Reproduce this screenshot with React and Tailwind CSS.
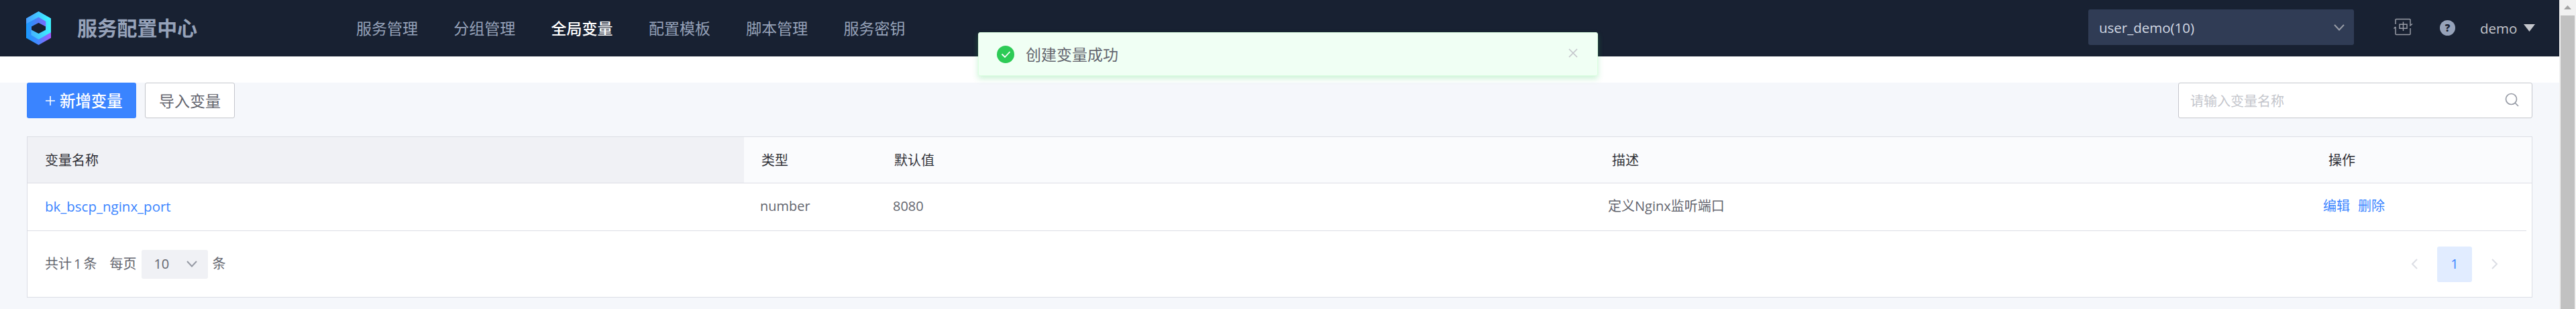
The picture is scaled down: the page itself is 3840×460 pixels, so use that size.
const NAV = ['服务管理', '分组管理', '全局变量', '配置模板', '脚本管理', '服务密钥'];

const CELL_FONT = "font-['Open_Sans','Noto_Sans_CJK_SC',sans-serif]";

function Logo() {
  return (
    <svg className="block h-[50px] w-[37px] shrink-0" viewBox="0 0 37 50">
      <defs>
        <linearGradient id="top" x1="0" y1="0" x2="1" y2="0">
          <stop offset="0" stopColor="#4a9cff" />
          <stop offset="0.9" stopColor="#3cf2ff" />
        </linearGradient>
        <linearGradient id="base" x1="0" y1="0" x2="1" y2="0">
          <stop offset="0" stopColor="#0f9bff" />
          <stop offset="0.5" stopColor="#4a86ff" />
          <stop offset="1" stopColor="#a55cff" />
        </linearGradient>
        <linearGradient id="inner" x1="0" y1="0" x2="1" y2="0">
          <stop offset="0" stopColor="#169cff" />
          <stop offset="0.5" stopColor="#4a80f5" />
          <stop offset="1" stopColor="#7a6cff" />
        </linearGradient>
        <linearGradient id="ring" x1="0" y1="0" x2="1" y2="0">
          <stop offset="0" stopColor="#45b4ff" />
          <stop offset="1" stopColor="#3cf2ff" />
        </linearGradient>
      </defs>
      <path d="M18.5 0 37 10.500V39.500L18.500 50 0 39.500V10.500Z" fill="url(#base)" />
      <path d="M18.500 0 37 10.500V31L18.500 41.500 7.500 35V15L0 19V10.500Z" fill="url(#top)" />
      <path d="M0 18.500 18.500 8.500 29.500 15V27.500H7.500V38L0 39.500Z" fill="url(#inner)" />
      <path d="M7.500 26.500 18.500 32.500 29.500 26V15L37 11V31L18.500 41.500 7.500 35Z" fill="url(#ring)" />
      <path d="M18.500 17 29 22.500V27.500L18.500 33 8 27.500V22.500Z" fill="#182132" />
    </svg>
  );
}

function Chevron({ className, d }) {
  return (
    <svg className={className} viewBox="0 0 16 16" fill="none" stroke="currentColor" strokeWidth="2">
      <path d={d} />
    </svg>
  );
}

function Header() {
  return (
    <header className="flex h-[84px] items-center bg-[#182132] text-[#96a2b9]">
      <div className="flex w-[531px] shrink-0 items-center pl-[39px]">
        <Logo />
        <h1 className="ml-[39px] text-[30px] leading-[40px] font-bold tracking-[-0.2px]">服务配置中心</h1>
      </div>
      <nav className="flex gap-[53px] pb-px text-[23px] leading-[34px]">
        {NAV.map((item) => (
          <a key={item} className={item === '全局变量' ? 'w-[92.3px] font-medium whitespace-nowrap text-white' : 'w-[92.3px] whitespace-nowrap'}>
            {item}
          </a>
        ))}
      </nav>
      <div className="ml-auto flex h-full items-center">
        <div className="mb-[3px] flex h-[53px] w-[396px] items-center justify-between rounded-[3px] bg-[#303c55] pr-[14px] pl-[16px] text-[#d3d9e4]">
          <span className="text-[20.5px] leading-[30px]">user_demo(10)</span>
          <Chevron className="h-4 w-4 text-[#979ba5]" d="M1 4 8 11.500 15 4" />
        </div>
        <svg className="mb-[3px] ml-[59px] h-[27px] w-[29px]" viewBox="0 0 29 27" fill="none" stroke="#979ba5" strokeWidth="1.500">
          <path d="M3 9V2.500Q3 1.500 4 1.500H24Q25 1.500 25 2.500V11L28 8.500M3 13V23.500Q3 24.500 4 24.500H24Q25 24.500 25 23.500V15M3 13 0.500 15.500" />
          <path d="M9 9.200H20V15.200H9ZM14.500 5.500V19" />
        </svg>
        <span className="mb-px ml-[40px] flex h-[23px] w-[23px] items-center justify-center rounded-full bg-[#96a2b9] text-[15px] leading-none font-extrabold text-[#182132]">?</span>
        <span className="ml-[37px] w-[56px] text-[20.5px] leading-[30px] text-[#c4c6cc]">demo</span>
        <svg className="mr-[36px] mb-px ml-[9px] h-[11px] w-[17px]" viewBox="0 0 17 11">
          <path d="M0 0H17L8.500 11Z" fill="#c4c6cc" />
        </svg>
      </div>
    </header>
  );
}

function Toast() {
  return (
    <div className="absolute top-[48px] left-[1458px] flex h-[65px] w-[924px] items-center rounded-[3px] border border-[#dcffe2] bg-[#f0fff4] pr-[29px] pl-[27px] shadow-[0_4px_8px_0_rgba(45,203,86,0.25)]">
      <svg className="h-[26px] w-[26px]" viewBox="0 0 26 26">
        <circle cx="13" cy="13" r="13" fill="#2dcb56" />
        <path d="M7.500 12.500 12 17 19.500 9" fill="none" stroke="#fff" strokeWidth="1.800" />
      </svg>
      <span className="ml-[17px] text-[23px] leading-[34px] text-[#63656e]">创建变量成功</span>
      <svg className="mb-[3px] ml-auto h-[14px] w-[14px]" viewBox="0 0 14 14" fill="none" stroke="#c4c6cc" strokeWidth="1.700">
        <path d="M1 1 13 13M13 1 1 13" />
      </svg>
    </div>
  );
}

function Toolbar() {
  return (
    <div className="flex h-[53px] items-stretch">
      <button className="flex w-[163px] items-center rounded-[3px] bg-[#3a84ff] pl-[28px] text-[23.4px] leading-[34px] text-white">
        <svg className="h-[14px] w-[14px]" viewBox="0 0 14 14" stroke="#fff" strokeWidth="1.600">
          <path d="M7 0V14M0 7H14" />
        </svg>
        <span className="ml-[7px] font-medium whitespace-nowrap">新增变量</span>
      </button>
      <button className="ml-[13px] flex w-[134px] items-center justify-center rounded-[3px] border border-[#c4c6cc] bg-white text-[23px] leading-[34px] whitespace-nowrap text-[#63656e]">
        导入变量
      </button>
      <div className="ml-auto flex w-[528px] items-center justify-between rounded-[3px] border border-[#c4c6cc] bg-white pr-[19px] pl-[17px]">
        <span className="pt-[2px] text-[20px] leading-[30px] text-[#c4c6cc]">请输入变量名称</span>
        <svg className="mb-[2px] h-[21px] w-[21px]" viewBox="0 0 21 21" fill="none" stroke="#979ba5" strokeWidth="1.700">
          <circle cx="9.500" cy="9.500" r="8" />
          <path d="M15 15 20 20" />
        </svg>
      </div>
    </div>
  );
}

function VariableTable() {
  return (
    <section className={`mt-[27px] h-[240px] border border-[#dcdee5] bg-white text-[20px] leading-[30px] text-[#63656e] ${CELL_FONT}`}>
      <div className="flex h-[69px] items-stretch border-b border-[#dcdee5] bg-[#fafbfd] text-[#313238]">
        <div className="flex w-[1068px] items-center bg-[#f0f1f5] pt-[2px] pl-[26px]">变量名称</div>
        <div className="flex w-[198px] items-center pt-[2px] pl-[26px]">类型</div>
        <div className="flex w-[1070px] items-center pt-[2px] pl-[26px]">默认值</div>
        <div className="flex w-[1068px] items-center pt-[2px] pl-[26px]">描述</div>
        <div className="flex items-center pt-[2px] pl-[26px]">操作</div>
      </div>
      <div className="mr-[8px] flex h-[71px] items-stretch border-b border-[#dcdee5] pb-[2px]">
        <div className="flex w-[1066px] items-center pl-[26px] text-[20.5px] text-[#3a84ff]">bk_bscp_nginx_port</div>
        <div className="flex w-[198px] items-center pl-[26px]">number</div>
        <div className="flex w-[1066px] items-center pl-[26px]">8080</div>
        <div className="flex w-[1066px] items-center pl-[26px]">定义Nginx监听端口</div>
        <div className="flex items-center gap-[12px] pl-[26px] text-[#3a84ff]">
          <a>编辑</a>
          <a>删除</a>
        </div>
      </div>
      <div className="flex h-[98px] items-center pl-[26px]">
        <span>共计</span>
        <span className="mx-[3px]">1</span>
        <span>条</span>
        <span className="ml-[19px]">每页</span>
        <div className="ml-[8px] flex h-[43px] w-[99px] items-center justify-between rounded-[3px] bg-[#f0f1f5] pr-[16px] pl-[18px]">
          <span>10</span>
          <Chevron className="h-4 w-4 text-[#979ba5]" d="M1 4 8 11.500 15 4" />
        </div>
        <span className="ml-[6px]">条</span>
        <div className="mr-[47px] ml-auto flex items-center text-[#dcdee5]">
          <Chevron className="h-4 w-4" d="M12 1 5 8 12 15" />
          <span className="mx-[26px] flex h-[53px] w-[52px] items-center justify-center rounded-[3px] bg-[#e1ecff] text-[#3a84ff]">1</span>
          <Chevron className="h-4 w-4" d="M4 1 11 8 4 15" />
        </div>
      </div>
    </section>
  );
}

function Scrollbar() {
  return (
    <aside className="flex w-[25px] shrink-0 flex-col items-center bg-[#f1f1f1]">
      <svg className="mt-[8px] h-[6px] w-[11px]" viewBox="0 0 11 6">
        <path d="M5.500 0 11 6H0Z" fill="#a3a3a3" />
      </svg>
      <div className="mt-[9px] w-[21px] flex-1 bg-[#c1c1c1]" />
    </aside>
  );
}

export default function App() {
  return (
    <div className={`relative flex h-[460px] w-[3840px] overflow-hidden bg-white ${CELL_FONT}`}>
      <div className="flex w-[3815px] flex-col">
        <Header />
        <main className="mt-[39px] flex-1 bg-[#f5f7fb] pr-[40px] pl-[40px]">
          <Toolbar />
          <VariableTable />
        </main>
      </div>
      <Scrollbar />
      <Toast />
    </div>
  );
}
